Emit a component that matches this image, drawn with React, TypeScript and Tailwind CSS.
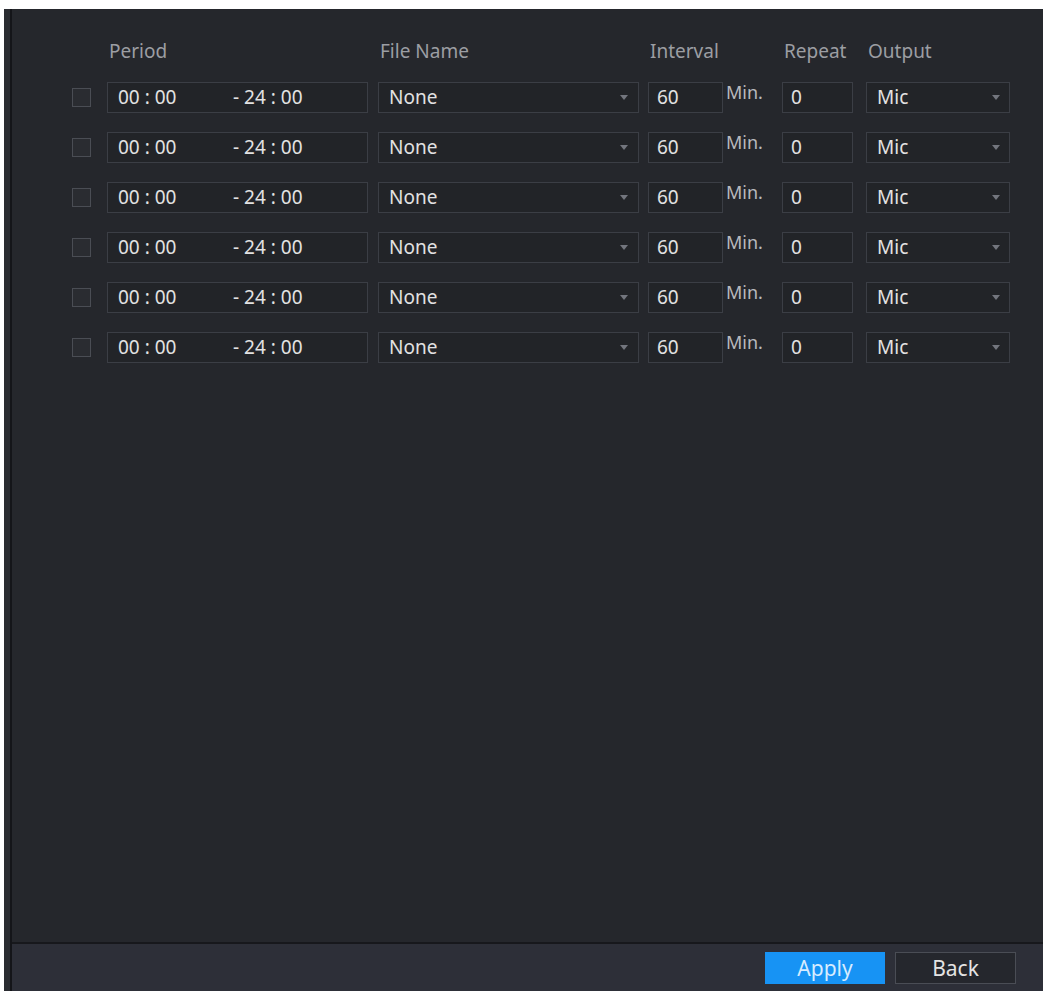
import React from 'react';

// 音频定时播放设置：六个时段行 + 底部按钮
const rows = Array.from({ length: 6 }, (_, i) => ({
  id: i,
  start: '00 : 00',
  end: '- 24 : 00',
  file: 'None',
  interval: '60',
  repeat: '0',
  output: 'Mic',
}));

const font = { fontFamily: '"Noto Sans", "Open Sans", sans-serif' };

const Arrow: React.FC = () => (
  <svg width="8" height="5" viewBox="0 0 8 5" className="shrink-0">
    <path d="M0 0 L8 0 L4 5 Z" fill="#73767e" />
  </svg>
);

const Field: React.FC<{ className?: string; children: React.ReactNode }> = ({ className = '', children }) => (
  <div
    className={`h-[31px] flex items-center border border-[#3b3e45] bg-[#222428] text-[19px] text-[#e2e2e2] ${className}`}
  >
    {children}
  </div>
);

const App: React.FC = () => {
  return (
    <div className="w-[1043px] h-[993px] bg-white pt-[9px] pl-[4px]" style={font}>
      <div className="h-[982px] flex border-l-[6px] border-[#2a2c31]">
        <div className="flex-1 flex flex-col border-l-2 border-[#141519] bg-[#25272c]">
          {/* 列表区域 */}
          <div className="flex-1 pt-[32px] pl-[60px]">
            <div className="flex h-[20px] items-center text-[19px] text-[#9c9ea3]">
              <span className="ml-[37px] w-[271px]">Period</span>
              <span className="w-[270px]">File Name</span>
              <span className="w-[134px]">Interval</span>
              <span className="w-[84px]">Repeat</span>
              <span>Output</span>
            </div>

            <div className="mt-[21px] flex flex-col gap-[19px]">
              {rows.map((row) => (
                <div key={row.id} className="flex items-center">
                  <div className="w-[19px] h-[19px] border border-[#4a4d54] bg-[#2a2c31]" />
                  <Field className="ml-[16px] w-[261px] pl-[10px]">
                    <span className="w-[115px]">{row.start}</span>
                    <span>{row.end}</span>
                  </Field>
                  <Field className="ml-[10px] w-[261px] pl-[10px] pr-[10px] justify-between">
                    <span>{row.file}</span>
                    <Arrow />
                  </Field>
                  <Field className="ml-[9px] w-[75px] pl-[8px]">
                    <span>{row.interval}</span>
                  </Field>
                  <span className="w-[59px] self-start pl-[3px] text-[18px] leading-[20px] text-[#b8b9bd]">
                    Min.
                  </span>
                  <Field className="w-[71px] pl-[8px]">
                    <span>{row.repeat}</span>
                  </Field>
                  <Field className="ml-[13px] w-[144px] pl-[10px] pr-[9px] justify-between">
                    <span>{row.output}</span>
                    <Arrow />
                  </Field>
                </div>
              ))}
            </div>
          </div>

          {/* 底部按钮栏 */}
          <div className="h-[49px] border-t-2 border-[#17181c] bg-[#2d2f38] flex items-start justify-end pt-[8px] pr-[27px] gap-[10px]">
            <button className="w-[120px] h-[32px] bg-[#1793f4] text-[21px] leading-none text-[#d6ecff]">Apply</button>
            <button className="w-[121px] h-[32px] border border-[#4a4d55] bg-[#25272d] text-[21px] leading-none text-[#e4e4e4]">
              Back
            </button>
          </div>
        </div>
      </div>
    </div>
  );
};

export default App;
